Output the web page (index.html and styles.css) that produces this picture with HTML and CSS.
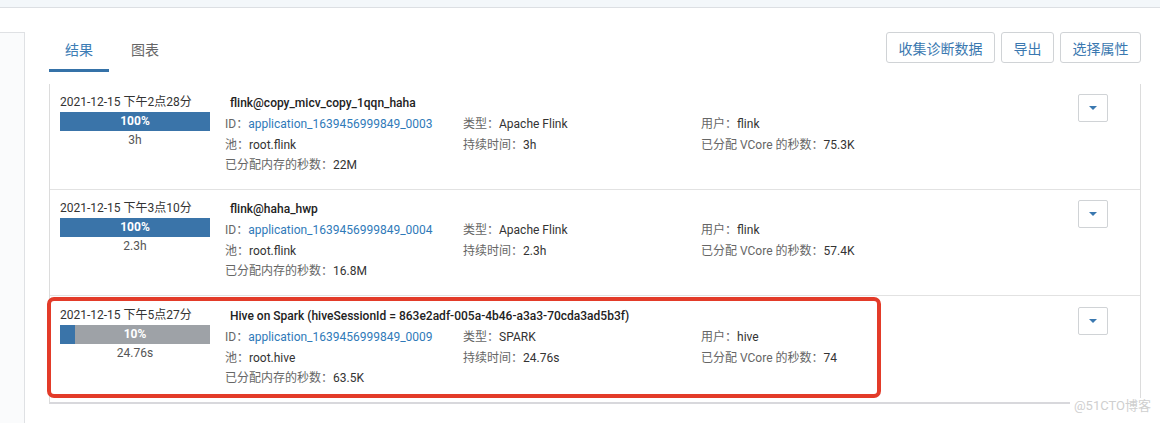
FILE: index.html
```html
<!DOCTYPE html>
<html lang="zh">
<head>
<meta charset="utf-8">
<title>Applications</title>
<link rel="stylesheet" href="styles.css">
</head>
<body>
<div class="topbar"></div>
<div class="main">
  <aside class="side"></aside>
  <section class="content">
    <div class="header">
      <div class="tabs">
        <div class="tab active">结果</div>
        <div class="tab">图表</div>
      </div>
      <div class="actions">
        <button class="btn">收集诊断数据</button>
        <button class="btn">导出</button>
        <button class="btn">选择属性</button>
      </div>
    </div>

    <div class="list">
      <div class="row">
        <div class="when">
          <div class="date">2021-12-15 下午2点28分</div>
          <div class="bar"><div class="fill" style="width:100%"></div><span class="pct">100%</span></div>
          <div class="dur">3h</div>
        </div>
        <div class="info">
          <div class="title">flink@copy_micv_copy_1qqn_haha</div>
          <div class="fields">
            <div class="f"><span class="k">ID：</span><a class="link">application_1639456999849_0003</a></div>
            <div class="f"><span class="k">类型：</span>Apache Flink</div>
            <div class="f"><span class="k">用户：</span>flink</div>
            <div class="f"><span class="k">池：</span>root.flink</div>
            <div class="f"><span class="k">持续时间：</span>3h</div>
            <div class="f"><span class="k">已分配 VCore 的秒数：</span>75.3K</div>
            <div class="f"><span class="k">已分配内存的秒数：</span>22M</div>
          </div>
        </div>
        <button class="drop"><span class="caret"></span></button>
      </div>

      <div class="row">
        <div class="when">
          <div class="date">2021-12-15 下午3点10分</div>
          <div class="bar"><div class="fill" style="width:100%"></div><span class="pct">100%</span></div>
          <div class="dur">2.3h</div>
        </div>
        <div class="info">
          <div class="title">flink@haha_hwp</div>
          <div class="fields">
            <div class="f"><span class="k">ID：</span><a class="link">application_1639456999849_0004</a></div>
            <div class="f"><span class="k">类型：</span>Apache Flink</div>
            <div class="f"><span class="k">用户：</span>flink</div>
            <div class="f"><span class="k">池：</span>root.flink</div>
            <div class="f"><span class="k">持续时间：</span>2.3h</div>
            <div class="f"><span class="k">已分配 VCore 的秒数：</span>57.4K</div>
            <div class="f"><span class="k">已分配内存的秒数：</span>16.8M</div>
          </div>
        </div>
        <button class="drop"><span class="caret"></span></button>
      </div>

      <div class="row">
        <div class="when">
          <div class="date">2021-12-15 下午5点27分</div>
          <div class="bar"><div class="fill" style="width:10%"></div><span class="pct">10%</span></div>
          <div class="dur">24.76s</div>
        </div>
        <div class="info">
          <div class="title">Hive on Spark (hiveSessionId = 863e2adf-005a-4b46-a3a3-70cda3ad5b3f)</div>
          <div class="fields">
            <div class="f"><span class="k">ID：</span><a class="link">application_1639456999849_0009</a></div>
            <div class="f"><span class="k">类型：</span>SPARK</div>
            <div class="f"><span class="k">用户：</span>hive</div>
            <div class="f"><span class="k">池：</span>root.hive</div>
            <div class="f"><span class="k">持续时间：</span>24.76s</div>
            <div class="f"><span class="k">已分配 VCore 的秒数：</span>74</div>
            <div class="f"><span class="k">已分配内存的秒数：</span>63.5K</div>
          </div>
        </div>
        <button class="drop"><span class="caret"></span></button>
        <div class="highlight"></div>
      </div>
    </div>
  </section>
</div>
<div class="watermark">@51CTO博客</div>
</body>
</html>
```

FILE: styles.css
```css
* { box-sizing: border-box; }
html, body {
  margin: 0;
  padding: 0;
  width: 1160px;
  height: 423px;
  overflow: hidden;
  background: #fff;
  font-family: Roboto, "Noto Sans CJK SC", sans-serif;
  font-size: 12px;
  color: #333;
  position: relative;
}
.topbar {
  height: 8px;
  background: #f3f7fa;
  border-bottom: 1px solid #dcdfe3;
}
.main {
  display: flex;
  height: 415px;
}
.side {
  width: 25px;
  margin-top: 24px;
  background: #fafbfc;
  border-top: 1px solid #dfe1e4;
  border-right: 1px solid #dfe1e4;
}
.content {
  flex: 1;
  padding: 24px 19px 0 24px;
}
.header {
  display: flex;
  justify-content: space-between;
  align-items: flex-start;
}
.tabs {
  display: flex;
  gap: 6px;
}
.tab {
  padding: 0 16px;
  line-height: 37px;
  font-size: 14px;
  color: #666;
  border-bottom: 3px solid transparent;
}
.tab.active {
  color: #3d7db5;
  border-bottom-color: #3572a8;
}
.actions {
  display: flex;
  gap: 6px;
}
.btn {
  height: 31px;
  padding: 0 11.5px;
  border: 1px solid #d0d3d6;
  border-radius: 3px;
  background: #fff;
  color: #3a78b0;
  font-family: Roboto, "Noto Sans CJK SC", sans-serif;
  font-size: 14px;
}
.list {
  margin-top: 12px;
  border-left: 1px solid #dcdcdc;
  border-right: 1px solid #dcdcdc;
  border-bottom: 2px solid #d8d8dc;
}
.row {
  position: relative;
  display: flex;
  align-items: flex-start;
  height: 106px;
  padding: 9px 0 0 10px;
  border-bottom: 1px solid #e2e2e2;
}
.row:last-child { border-bottom: none; height: 106px; padding-top: 10px; }
.when {
  width: 150px;
  flex: none;
}
.date {
  line-height: 18px;
  color: #333;
}
.bar {
  position: relative;
  margin-top: 1px;
  height: 19px;
  background: #9ea2a7;
}
.fill {
  height: 100%;
  background: #3a74a9;
}
.pct {
  position: absolute;
  inset: 0;
  text-align: center;
  line-height: 19px;
  color: #fff;
  font-weight: 700;
}
.dur {
  text-align: center;
  line-height: 18px;
  color: #555;
}
.info {
  margin-left: 15px;
  flex: 1;
}
.title {
  padding-left: 5px;
  line-height: 21px;
  font-weight: 500;
  color: #222;
}
.fields {
  display: grid;
  grid-template-columns: 238px 238px 1fr;
}
.f {
  line-height: 20.7px;
  color: #333;
  white-space: nowrap;
}
.k { color: #666; }
.link { color: #2f7ab9; text-decoration: none; }
.drop {
  flex: none;
  width: 30px;
  height: 28px;
  margin: 1px 32px 0 0;
  border: 1px solid #d0d3d6;
  border-radius: 2px;
  background: #fff;
  display: flex;
  align-items: center;
  justify-content: center;
  padding: 0;
}
.caret {
  width: 0;
  height: 0;
  border-left: 4px solid transparent;
  border-right: 4px solid transparent;
  border-top: 4px solid #3a78b0;
}
.highlight {
  position: absolute;
  left: -3px;
  top: 1px;
  width: 834px;
  height: 101px;
  border: 4px solid #e33b29;
  border-radius: 7px;
  pointer-events: none;
}
.watermark {
  position: absolute;
  right: 9px;
  top: 398px;
  font-size: 13px;
  color: #cfcfcf;
  background: #fff;
  padding: 0 0 0 4px;
  line-height: 16px;
}
```
